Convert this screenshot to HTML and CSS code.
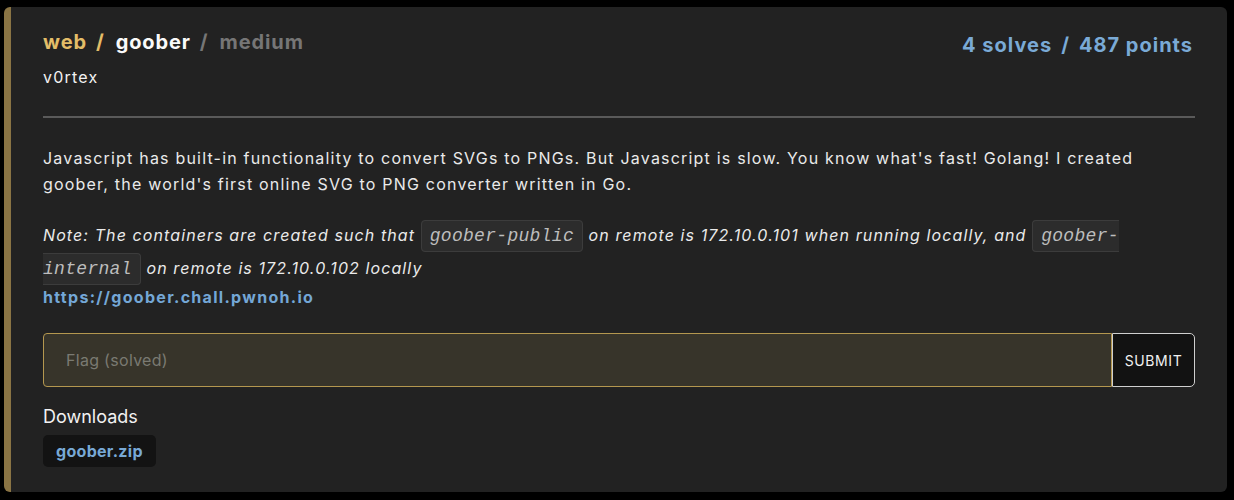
FILE: index.html
```html
<!DOCTYPE html>
<html>
<head>
<meta charset="utf-8">
<link rel="stylesheet" href="styles.css">
</head>
<body>
<div class="card">
  <div class="header">
    <div class="title-block">
      <div class="title"><span class="cat">web<span class="slash">/</span></span><span class="name">goober</span><span class="diff"><span class="slash">/</span>medium</span></div>
      <div class="author">v0rtex</div>
    </div>
    <div class="stats">4 solves<span class="slash">/</span>487 points</div>
  </div>
  <hr class="divider">
  <div class="desc">
    <p class="p1">Javascript has built-in functionality to convert SVGs to PNGs. But Javascript is slow. You know what's fast! Golang! I created goober, the world's first online SVG to PNG converter written in Go.</p>
    <p class="note"><em>Note: The containers are created such that <code>goober-public</code> on remote is 172.10.0.101 when running locally, and <code>goober-internal</code> on remote is 172.10.0.102 locally</em></p>
    <a class="link" href="#">https://goober.chall.pwnoh.io</a>
  </div>
  <form class="flag-form">
    <input class="flag-input" type="text" placeholder="Flag (solved)">
    <button class="submit" type="button">SUBMIT</button>
  </form>
  <div class="downloads">
    <div class="dl-title">Downloads</div>
    <a class="dl-chip" href="#">goober.zip</a>
  </div>
</div>
</body>
</html>
```
FILE: styles.css
```css
html, body {
  margin: 0;
  background: #000;
}
body {
  padding: 7px 7px 8px 4px;
  font-family: Inter, "Noto Sans", sans-serif;
  color: #ececec;
}
.card {
  background: #222;
  border-left: 7px solid #8a7444;
  border-radius: 6px;
  padding: 21px 32px 25px 32px;
}
.header {
  display: flex;
  justify-content: space-between;
  align-items: flex-start;
}
.title {
  font-size: 20px;
  font-weight: 700;
  line-height: 28px;
  letter-spacing: 0.9px;
}
.slash {
  display: inline-block;
  margin: 0 11px 0 9px;
}
.cat { color: #e3bd68; }
.name { color: #fafafa; }
.diff { color: #767676; }
.author {
  margin-top: 9px;
  font-size: 16px;
  line-height: 24px;
  letter-spacing: 1.2px;
  color: #f2f2f2;
}
.stats {
  margin-top: 3px;
  margin-right: 2px;
  font-size: 20px;
  font-weight: 700;
  line-height: 28px;
  letter-spacing: 1px;
  color: #7aaad6;
}
.stats .slash {
  margin: 0 9px 0 9px;
}
.divider {
  border: 0;
  height: 2px;
  background: #5a5a5a;
  margin: 27px 0 27px 0;
}
.desc {
  font-size: 16px;
  line-height: 26px;
  letter-spacing: 1.2px;
  color: #eaeaea;
}
.desc p { margin: 0; }
.p1 { margin-bottom: 22px !important; }
.note {
  line-height: 32px;
  letter-spacing: 1.1px;
}
.note code {
  font-family: "Liberation Mono", monospace;
  font-size: 18px;
  letter-spacing: 0.3px;
  font-style: italic;
  color: #bdbdbd;
  background: #2c2c2c;
  border: 1px solid #3c3c3c;
  border-radius: 4px;
  padding: 5px 8px;
}
.link {
  display: block;
  margin-top: -1px;
  color: #74a7d6;
  font-weight: 700;
  letter-spacing: 1.3px;
  text-decoration: none;
  line-height: 26px;
}
.flag-form {
  display: flex;
  margin-top: 23px;
  height: 54px;
}
.flag-input {
  flex: 1;
  box-sizing: border-box;
  background: #37342a;
  border: 1px solid #b4974f;
  border-radius: 4px 0 0 4px;
  padding: 0 22px;
  font-family: Inter, sans-serif;
  font-size: 16px;
  letter-spacing: 0.3px;
  color: #ddd;
  outline: none;
}
.flag-input::placeholder { color: #7a7a72; }
.submit {
  width: 83px;
  box-sizing: border-box;
  background: #121212;
  border: 1px solid #cfcfcf;
  border-radius: 0 5px 5px 0;
  color: #f0f0f0;
  font-family: Inter, sans-serif;
  font-size: 14px;
  letter-spacing: 0.6px;
  padding: 0;
}
.downloads {
  margin-top: 16px;
}
.dl-title {
  font-size: 18px;
  line-height: 27px;
  color: #f2f2f2;
}
.dl-chip {
  display: inline-block;
  margin-top: 5px;
  background: #131313;
  border-radius: 5px;
  padding: 0 13px;
  height: 32px;
  line-height: 32px;
  color: #78a9d6;
  font-weight: 700;
  font-size: 16px;
  letter-spacing: 0.3px;
  text-decoration: none;
}
```
